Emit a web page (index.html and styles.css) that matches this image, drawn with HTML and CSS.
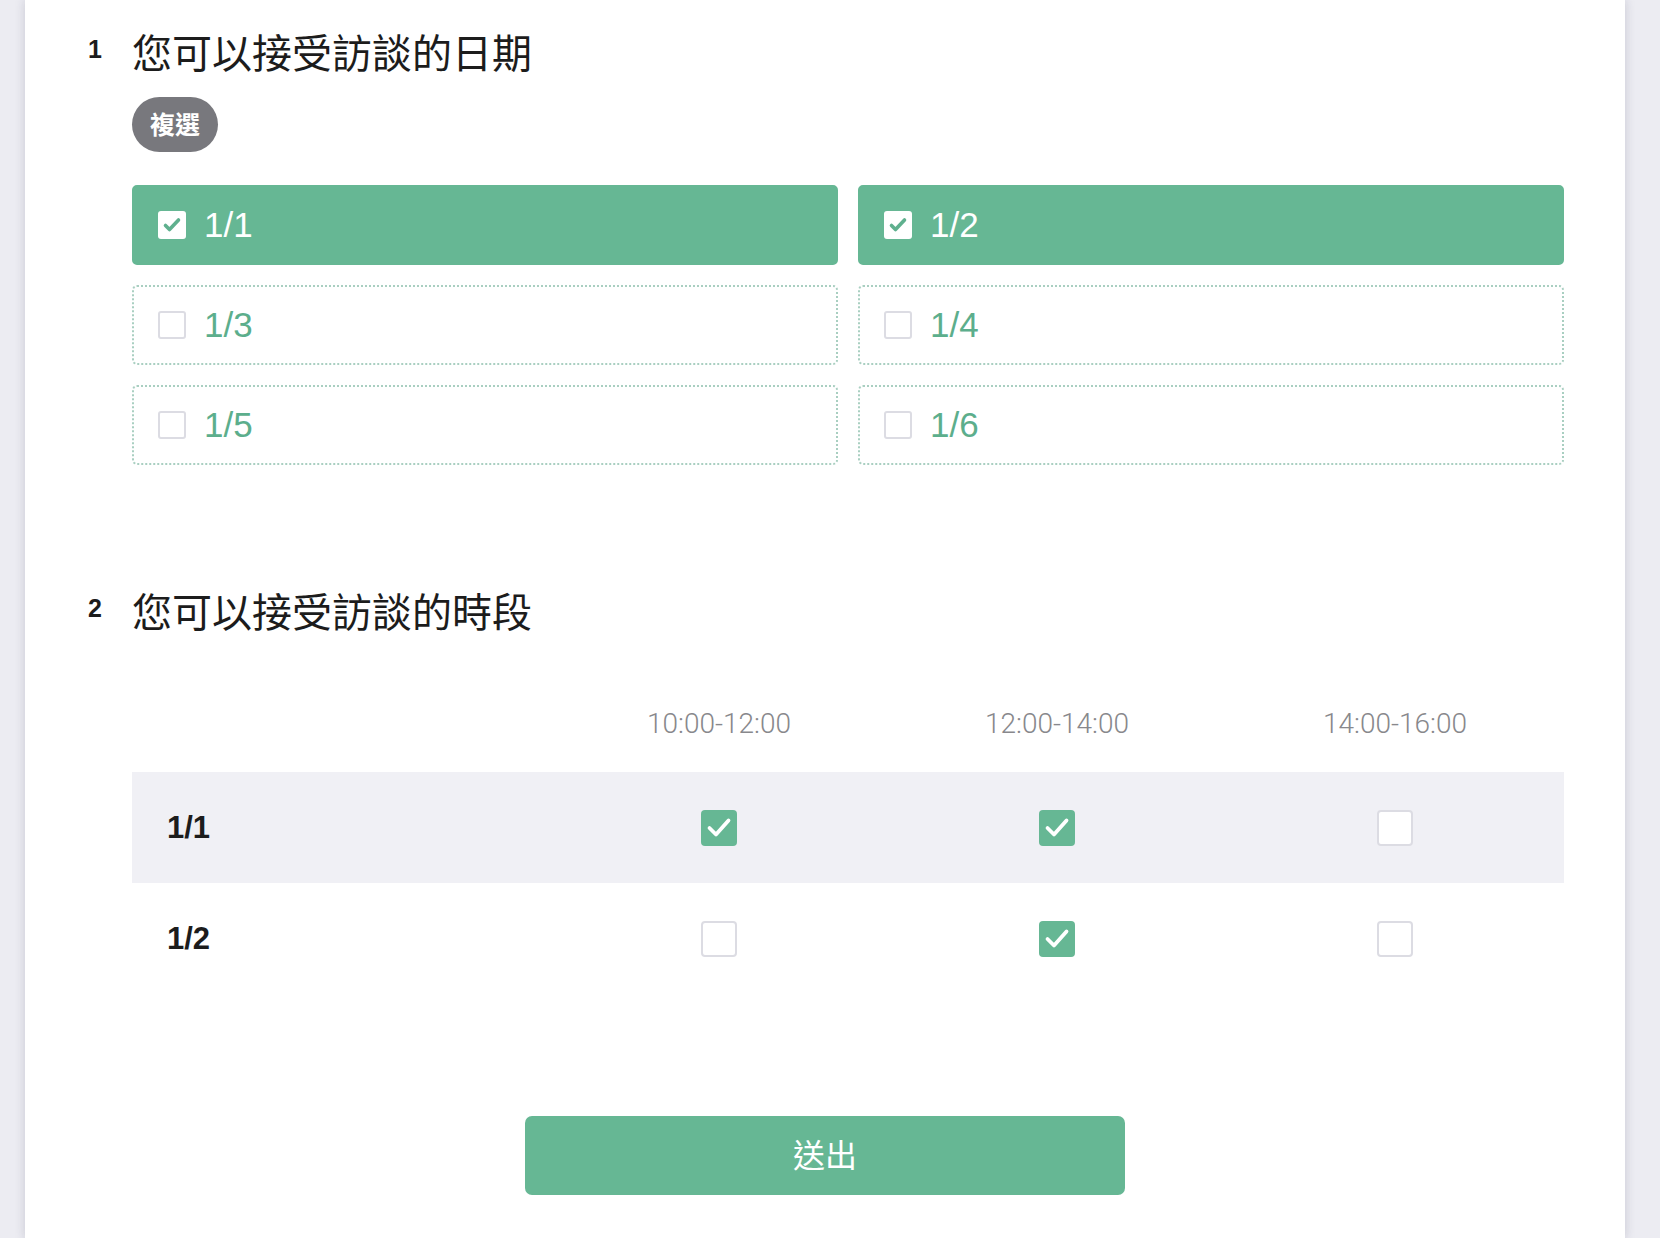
FILE: index.html
```html
<!DOCTYPE html>
<html lang="zh-Hant">
<head>
    <meta charset="UTF-8">
    <meta name="viewport" content="width=device-width, initial-scale=1.0">
    <title>訪談時間調查</title>
    <link rel="stylesheet" href="styles.css">
</head>
<body>
    <div class="page">
        <section class="question">
            <div class="q-num">1</div>
            <div class="q-body">
                <h2 class="q-title">您可以接受訪談的日期</h2>
                <span class="badge">複選</span>
                <div class="options">
                    <label class="option checked">
                        <span class="box"><svg viewBox="0 0 28 28"><path d="M7.5 14.5l4 4 9-9.5"/></svg></span>
                        <span class="opt-text">1/1</span>
                    </label>
                    <label class="option checked">
                        <span class="box"><svg viewBox="0 0 28 28"><path d="M7.5 14.5l4 4 9-9.5"/></svg></span>
                        <span class="opt-text">1/2</span>
                    </label>
                    <label class="option">
                        <span class="box"></span>
                        <span class="opt-text">1/3</span>
                    </label>
                    <label class="option">
                        <span class="box"></span>
                        <span class="opt-text">1/4</span>
                    </label>
                    <label class="option">
                        <span class="box"></span>
                        <span class="opt-text">1/5</span>
                    </label>
                    <label class="option">
                        <span class="box"></span>
                        <span class="opt-text">1/6</span>
                    </label>
                </div>
            </div>
        </section>

        <section class="question second">
            <div class="q-num">2</div>
            <div class="q-body">
                <h2 class="q-title">您可以接受訪談的時段</h2>
                <div class="matrix">
                    <div class="m-row m-head">
                        <div class="m-label"></div>
                        <div class="m-cell">10:00-12:00</div>
                        <div class="m-cell">12:00-14:00</div>
                        <div class="m-cell">14:00-16:00</div>
                    </div>
                    <div class="m-row shaded">
                        <div class="m-label">1/1</div>
                        <div class="m-cell"><span class="tick on"><svg viewBox="0 0 36 36"><path d="M8.5 18l6.5 6.5 12.5-14"/></svg></span></div>
                        <div class="m-cell"><span class="tick on"><svg viewBox="0 0 36 36"><path d="M8.5 18l6.5 6.5 12.5-14"/></svg></span></div>
                        <div class="m-cell"><span class="tick"></span></div>
                    </div>
                    <div class="m-row">
                        <div class="m-label">1/2</div>
                        <div class="m-cell"><span class="tick"></span></div>
                        <div class="m-cell"><span class="tick on"><svg viewBox="0 0 36 36"><path d="M8.5 18l6.5 6.5 12.5-14"/></svg></span></div>
                        <div class="m-cell"><span class="tick"></span></div>
                    </div>
                </div>
            </div>
        </section>

        <div class="actions">
            <button class="submit">送出</button>
        </div>
    </div>
</body>
</html>
```

FILE: styles.css
```css
body {
    margin: 0;
    padding: 0;
    background-color: #ececf2;
    font-family: 'Liberation Sans', 'Noto Sans CJK TC', sans-serif;
    color: #1c1c1c;
}

.page {
    width: 1600px;
    min-height: 100vh;
    margin-left: 25px;
    box-sizing: border-box;
    padding: 26px 61px 0 63px;
    background-color: #ffffff;
    box-shadow: 0 0 10px rgba(40, 40, 70, 0.18); /* 两侧的阴影 */
}

.question {
    display: flex;
}

.question.second {
    margin-top: 120px;
}

.q-num {
    width: 44px;
    flex-shrink: 0;
    font-size: 25px;
    font-weight: bold;
    line-height: 46px;
}

.q-body {
    flex: 1;
}

.q-title {
    margin: 0;
    font-family: 'Noto Sans CJK TC', sans-serif;
    font-size: 40px;
    font-weight: 400;
    line-height: 50px;
    color: #1c1c1c;
}

.badge {
    display: inline-block;
    margin-top: 21px;
    height: 55px;
    padding: 0 18px;
    border-radius: 28px;
    background-color: #78787d;
    color: #ffffff;
    font-family: 'Noto Sans CJK TC', sans-serif;
    font-size: 25px;
    font-weight: bold;
    line-height: 53px;
}

/* 日期選項 */
.options {
    margin-top: 33px;
    display: grid;
    grid-template-columns: 1fr 1fr;
    gap: 20px;
}

.option {
    height: 80px;
    box-sizing: border-box;
    display: flex;
    align-items: center;
    padding-left: 24px;
    border: 2px dotted #a9cfc1;
    border-radius: 5px;
    background-color: #ffffff;
    color: #5cae8c;
}

.option.checked {
    border: 2px solid #66b794;
    background-color: #66b794;
    color: #ffffff;
}

.option .box {
    width: 28px;
    height: 28px;
    box-sizing: border-box;
    border: 2px solid #dcdce3;
    border-radius: 3px;
    background-color: #ffffff;
    display: flex;
}

.option.checked .box {
    border: none;
}

.option .box svg {
    width: 28px;
    height: 28px;
    fill: none;
    stroke: #5fb08e;
    stroke-width: 3.6;
    stroke-linecap: round;
    stroke-linejoin: round;
}

.opt-text {
    margin-left: 18px;
    font-size: 35px;
    line-height: 40px;
}

/* 時段表格 */
.matrix {
    margin-top: 72px;
}

.m-row {
    display: grid;
    grid-template-columns: 418px repeat(3, 1fr);
    height: 111px;
    align-items: center;
}

.m-row.m-head {
    height: 65px;
    align-items: start;
    font-family: 'Roboto', sans-serif;
    font-weight: 300;
    font-size: 28px;
    line-height: 34px;
    color: #88888c;
}

.m-row.shaded {
    background-color: #f0f0f5;
}

.m-label {
    padding-left: 35px;
    font-size: 31px;
    font-weight: bold;
    color: #1c1c1c;
}

.m-cell {
    display: flex;
    justify-content: center;
}

.tick {
    width: 36px;
    height: 36px;
    box-sizing: border-box;
    border: 2px solid #dcdce3;
    border-radius: 4px;
    background-color: #ffffff;
    display: flex;
}

.tick.on {
    border: none;
    background-color: #66b794;
}

.tick svg {
    width: 36px;
    height: 36px;
    fill: none;
    stroke: #ffffff;
    stroke-width: 3.8;
    stroke-linecap: round;
    stroke-linejoin: round;
}

.actions {
    margin: 122px -61px 0 -63px;
    display: flex;
    justify-content: center;
    padding-bottom: 44px;
}

.submit {
    width: 600px;
    height: 79px;
    padding-bottom: 6px;
    border: none;
    border-radius: 7px;
    background-color: #66b794;
    color: #ffffff;
    font-family: 'Noto Sans CJK TC', sans-serif;
    font-size: 32px;
    cursor: pointer;
}
```
